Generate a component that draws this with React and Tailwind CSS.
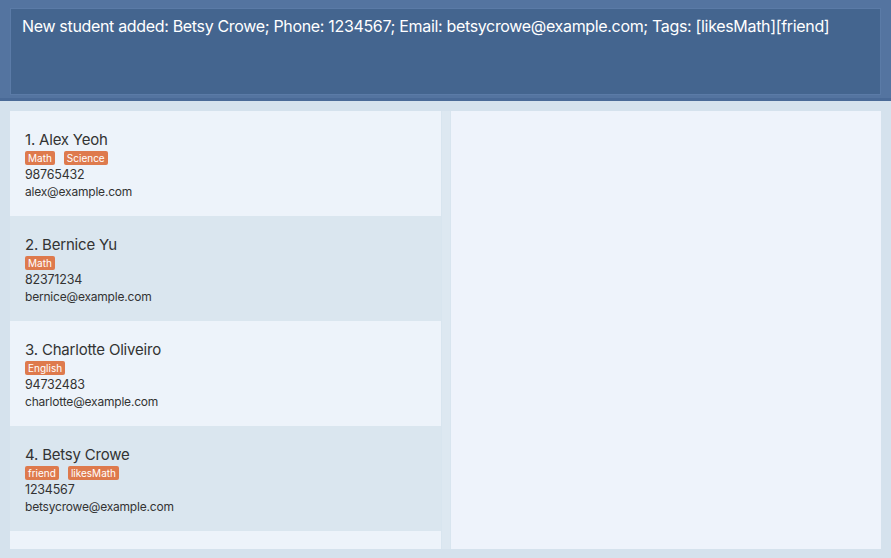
import React from "react";

const students = [
  { name: "Alex Yeoh", tags: ["Math", "Science"], phone: "98765432", email: "alex@example.com" },
  { name: "Bernice Yu", tags: ["Math"], phone: "82371234", email: "bernice@example.com" },
  { name: "Charlotte Oliveiro", tags: ["English"], phone: "94732483", email: "charlotte@example.com" },
  { name: "Betsy Crowe", tags: ["friend", "likesMath"], phone: "1234567", email: "betsycrowe@example.com" },
  { name: "", tags: [], phone: "", email: "" },
];

function StudentCard({ s, i }) {
  const odd = i % 2 === 0;
  return (
    <div className={`h-[105px] shrink-0 pl-[15px] pt-[19px] ${odd ? "bg-[#edf3fa]" : "bg-[#dae6ef]"}`}>
      {s.name && (
        <>
          <div className="text-[15px] leading-[20px] tracking-[-0.2px] text-[#333333]">
            {i + 1}. {s.name}
          </div>
          <div className="flex gap-[9px] mt-[1px]">
            {s.tags.map((t) => (
              <span
                key={t}
                className="h-[14px] px-[3px] rounded-[2px] bg-[#de7a4d] text-white text-[10px] leading-[14px]"
              >
                {t}
              </span>
            ))}
          </div>
          <div className="text-[12.5px] leading-[17px] tracking-[-0.2px] text-[#333333] mt-[1px]">{s.phone}</div>
          <div className="text-[12px] leading-[17px] tracking-[-0.2px] text-[#333333]">{s.email}</div>
        </>
      )}
    </div>
  );
}

export default function App() {
  return (
    <div
      className="w-[891px] h-[558px] flex flex-col bg-[#d5e2ed] overflow-hidden"
      style={{ fontFamily: "Inter, 'Open Sans', sans-serif" }}
    >
      {/* result display */}
      <div className="h-[101px] shrink-0 bg-[#5474a0] border-b-[3px] border-[#4a6a97] px-[10px] pt-[8px]">
        <div className="h-[87px] border border-[#5b7ba7] bg-[#44658f] px-[11px] pt-[7px] text-[16px] leading-[20px] tracking-[-0.33px] text-white">
          New student added: Betsy Crowe; Phone: 1234567; Email: betsycrowe@example.com; Tags: [likesMath][friend]
        </div>
      </div>

      {/* main panels */}
      <div className="flex flex-1 min-h-0 px-[10px] pt-[10px] pb-[9px]">
        <div className="w-[431px] flex flex-col overflow-hidden">
          {students.map((s, i) => (
            <StudentCard key={i} s={s} i={i} />
          ))}
        </div>
        <div className="w-[10px] bg-[#dde8f1] border-x border-[#d8e5ef]" />
        <div className="flex-1 bg-[#eef3fb]" />
      </div>
    </div>
  );
}
